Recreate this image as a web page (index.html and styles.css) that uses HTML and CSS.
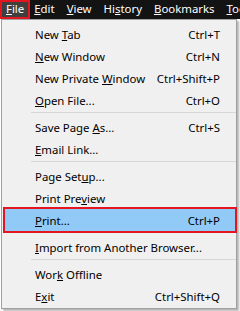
FILE: index.html
```html
<!DOCTYPE html>
<html lang="en">
<head>
  <meta charset="UTF-8">
  <title>File menu</title>
  <link rel="stylesheet" href="styles.css">
</head>
<body>

  <div class="menubar">
    <span class="top active"><u>F</u>ile</span>
    <span class="top"><u>E</u>dit</span>
    <span class="top"><u>V</u>iew</span>
    <span class="top">Hi<u>s</u>tory</span>
    <span class="top"><u>B</u>ookmarks</span>
    <span class="top"><u>T</u>ools</span>
  </div>

  <div class="menu">
    <div class="item"><span>New <u>T</u>ab</span><span>Ctrl+T</span></div>
    <div class="item"><span><u>N</u>ew Window</span><span>Ctrl+N</span></div>
    <div class="item"><span>New Private <u>W</u>indow</span><span>Ctrl+Shift+P</span></div>
    <div class="item"><span><u>O</u>pen File...</span><span>Ctrl+O</span></div>
    <div class="sep"></div>
    <div class="item"><span>Save Page <u>A</u>s...</span><span>Ctrl+S</span></div>
    <div class="item"><span><u>E</u>mail Link...</span><span></span></div>
    <div class="sep"></div>
    <div class="item"><span>Page Set<u>u</u>p...</span><span></span></div>
    <div class="item"><span>Print Pre<u>v</u>iew</span><span></span></div>
    <div class="item hover"><span><u>P</u>rint...</span><span>Ctrl+P</span></div>
    <div class="sep"></div>
    <div class="item"><span><u>I</u>mport from Another Browser...</span><span></span></div>
    <div class="sep"></div>
    <div class="item"><span>Wor<u>k</u> Offline</span><span></span></div>
    <div class="item"><span>E<u>x</u>it</span><span>Ctrl+Shift+Q</span></div>
  </div>

</body>
</html>
```

FILE: styles.css
```css
*{box-sizing:border-box;margin:0;padding:0}
body{
  width:240px;
  height:311px;
  background:#fff;
  font-family:"Noto Sans",sans-serif;
  font-size:11.4px;
  color:#000;
  overflow:hidden;
}
u{text-decoration:underline;text-underline-offset:1px}
/* top menubar */
.menubar{
  height:19px;
  background:#131313;
  color:#fff;
  display:flex;
  align-items:stretch;
  white-space:nowrap;
  overflow:hidden;
}
.top{
  padding:0 6px;
  line-height:18px;
}
.top.active{
  background:#3f3f3f;
  border:2px solid #e3161f;
  line-height:14px;
  padding:0 4px;
  width:32px;
  margin-right:-2px;
}
/* dropdown */
.menu{
  margin-left:1px;
  width:236px;
  height:290px;
  background:#f0f0f0;
  border:1px solid #a0a0a0;
  padding-top:3px;
  box-shadow:2px 2px 2px rgba(0,0,0,.3);
}
.item{
  height:22px;
  margin:0 1px 0 3px;
  padding:0 15px 0 30px;
  display:flex;
  justify-content:space-between;
  align-items:center;
  white-space:nowrap;
}
.item.hover{
  background:#91c9f7;
  outline:2px solid #e3161f;
}
.sep{
  height:5px;
  margin-left:29px;
  padding-top:1px;
}
.sep::after{
  content:"";
  display:block;
  height:1px;
  background:#d7d7d7;
}
```
